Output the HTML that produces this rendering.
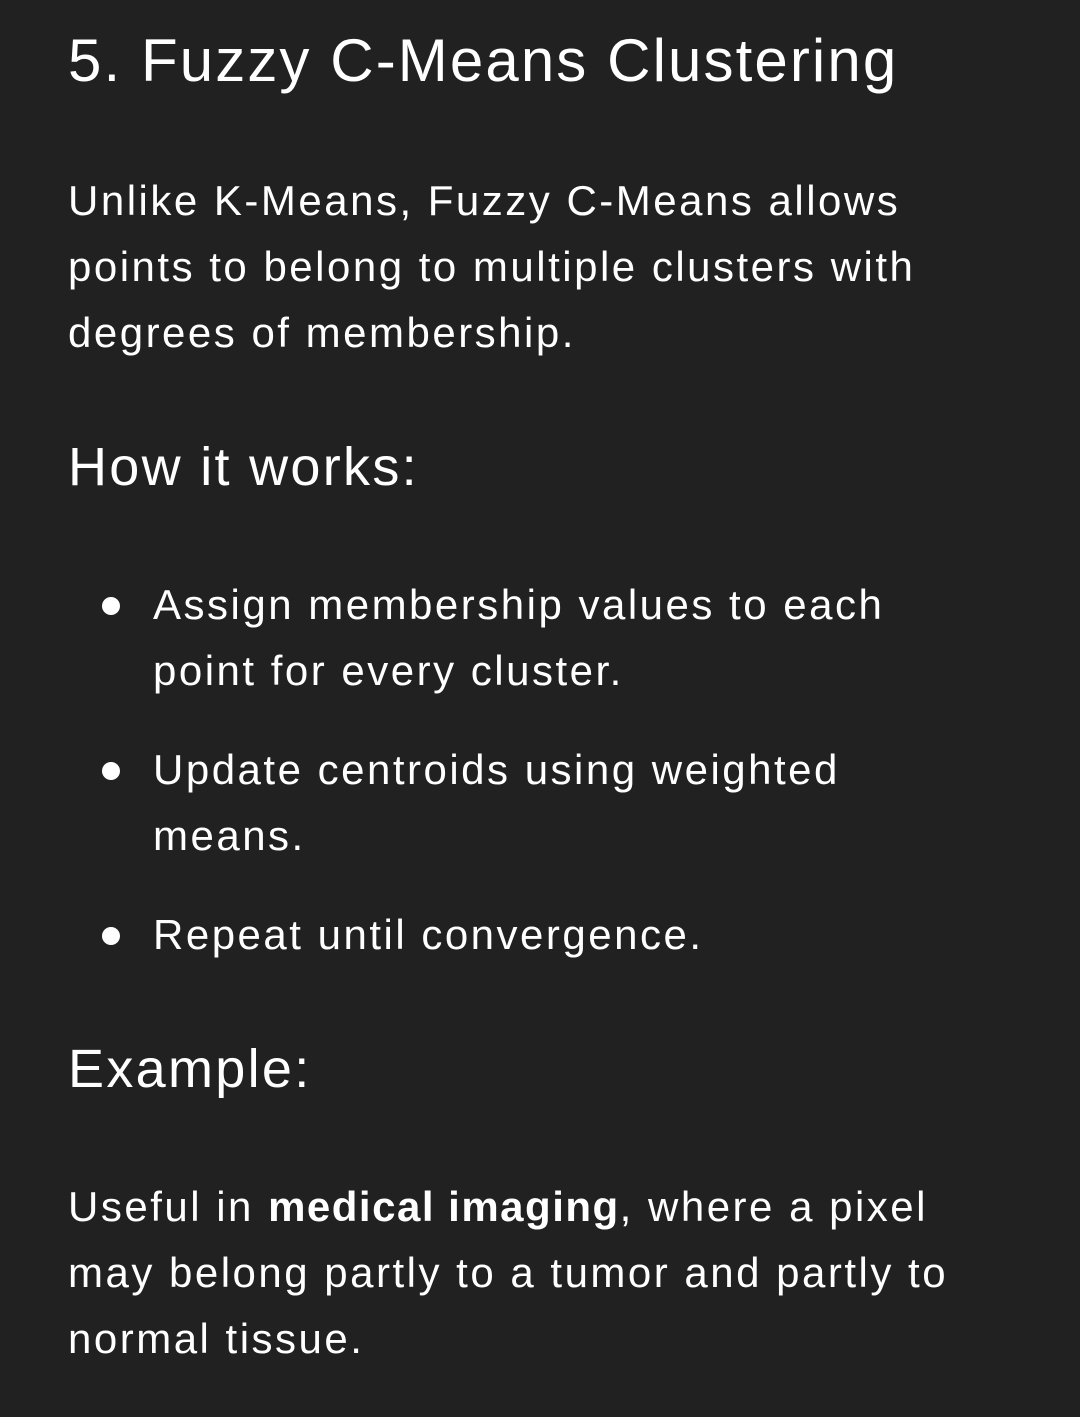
<!DOCTYPE html>
<html><head><meta charset="utf-8"><style>
html,body{margin:0;padding:0;background:#212121;width:1080px;height:1417px;overflow:hidden}
body{position:relative;font-family:"Liberation Sans","DejaVu Sans",sans-serif;color:#fff}
.t{position:absolute;left:68px;white-space:nowrap}
.h1{font-size:60px;top:26px;letter-spacing:2.1px}
.p{font-size:42px;letter-spacing:2.5px}
.h2{font-size:54px;letter-spacing:2.3px}
.dot{position:absolute;left:102px;width:18px;height:18px;border-radius:50%;background:#fff}
.li{left:153px}
b{font-weight:bold;letter-spacing:1.5px}
</style></head><body>
<div class="t h1">5. Fuzzy C-Means Clustering</div>
<div class="t p" style="top:177px">Unlike K-Means, Fuzzy C-Means allows</div>
<div class="t p" style="top:243px">points to belong to multiple clusters with</div>
<div class="t p" style="top:309px">degrees of membership.</div>
<div class="t h2" style="top:436px">How it works:</div>
<div class="dot" style="top:597px"></div>
<div class="t p li" style="top:581px">Assign membership values to each</div>
<div class="t p li" style="top:647px">point for every cluster.</div>
<div class="dot" style="top:762px"></div>
<div class="t p li" style="top:746px">Update centroids using weighted</div>
<div class="t p li" style="top:812px">means.</div>
<div class="dot" style="top:927px"></div>
<div class="t p li" style="top:911px">Repeat until convergence.</div>
<div class="t h2" style="top:1038px">Example:</div>
<div class="t p" style="top:1183px">Useful in <b>medical imaging</b>, where a pixel</div>
<div class="t p" style="top:1249px">may belong partly to a tumor and partly to</div>
<div class="t p" style="top:1315px">normal tissue.</div>
</body></html>
